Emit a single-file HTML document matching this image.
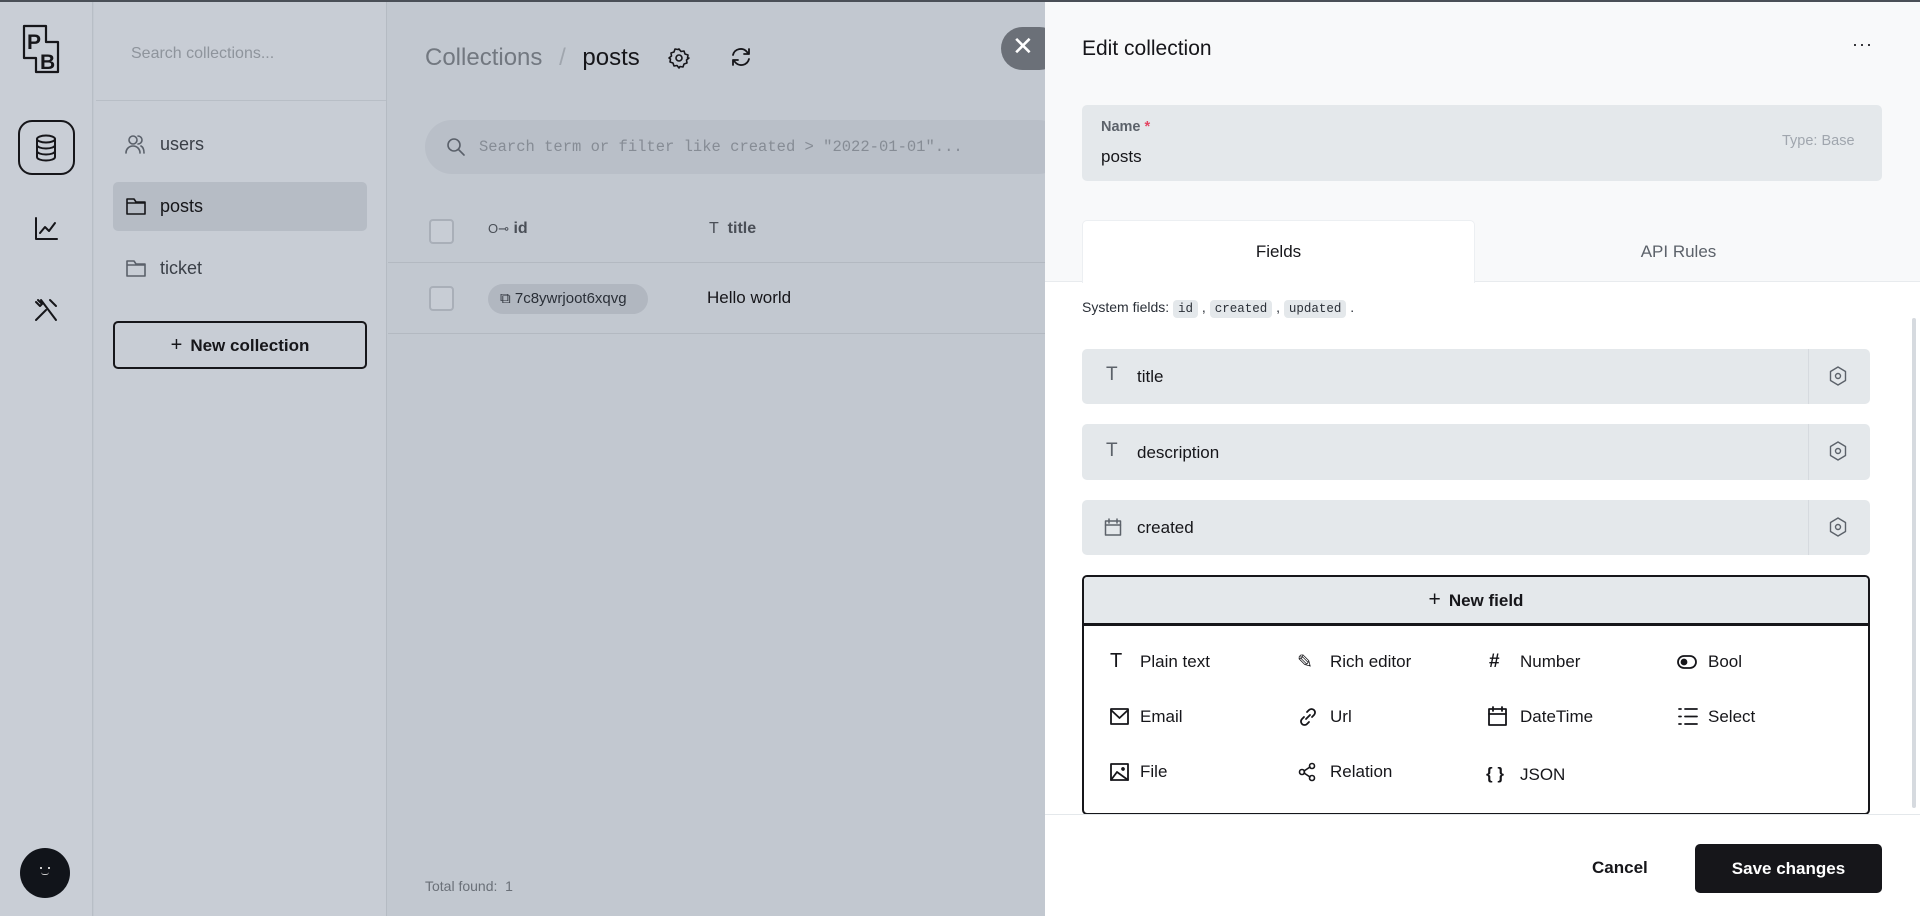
<!DOCTYPE html>
<html><head><meta charset="utf-8"><style>
*{box-sizing:border-box;margin:0;padding:0}
body{width:1920px;height:916px;overflow:hidden;font-family:"Liberation Sans",sans-serif;color:#16161a;position:relative;background:#c2c8d0}
.abs{position:absolute;white-space:nowrap}
svg{display:block}
.ic{fill:none;stroke:currentColor;stroke-width:1.6;stroke-linecap:round;stroke-linejoin:round}
</style></head><body>
<div class="abs" style="left:0;top:0;width:1920px;height:2px;background:#4a4f57;z-index:5"></div>
<!-- left sidebar -->
<div class="abs" style="left:0;top:0;width:93px;height:916px;background:#c9ced6;border-right:1px solid #b8bec6"></div>
<div class="abs" style="left:22px;top:24px;color:#16161a">
<svg width="48" height="50" viewBox="0 0 48 50" class="ic" style="stroke-width:2.2"><path d="M2 2h22v16h12v30H14V34H2z"/><text x="5" y="25" font-size="21" font-family="Liberation Sans" fill="#16161a" stroke="none" font-weight="bold">P</text><text x="18" y="45" font-size="21" font-family="Liberation Sans" fill="#16161a" stroke="none" font-weight="bold">B</text></svg></div>
<div class="abs" style="left:18px;top:120px;width:57px;height:55px;border:2px solid #16161a;border-radius:14px"></div>
<svg class="abs ic" style="left:33px;top:134px;stroke-width:2" width="26" height="28" viewBox="0 0 26 28"><ellipse cx="13" cy="5" rx="9" ry="3.5"/><path d="M4 5v18c0 2 4 3.5 9 3.5s9-1.5 9-3.5V5M4 11c0 2 4 3.5 9 3.5s9-1.5 9-3.5M4 17c0 2 4 3.5 9 3.5s9-1.5 9-3.5"/></svg>
<svg class="abs ic" style="left:33px;top:216px;stroke-width:2" width="26" height="26" viewBox="0 0 26 26"><path d="M3 2v21h21M7 17l5-6 4 4 6-8"/></svg>
<svg class="abs ic" style="left:33px;top:297px;stroke-width:2" width="26" height="26" viewBox="0 0 26 26"><path d="M3 23l10-10M17 3l6 6M8 3l15 20M5 3l4 4-2 2-4-4"/></svg>
<div class="abs" style="left:20px;top:848px;width:50px;height:50px;border-radius:50%;background:#11141a"></div>
<div class="abs" style="left:40px;top:867px;width:2px;height:2px;background:#ccc"></div><div class="abs" style="left:48px;top:867px;width:2px;height:2px;background:#ccc"></div>
<div class="abs" style="left:41px;top:872px;width:8px;height:3px;border-bottom:1.5px solid #ccc;border-radius:0 0 4px 4px"></div>
<!-- collections panel -->
<div class="abs" style="left:94px;top:0;width:293px;height:916px;background:#c8cdd5;border-right:1px solid #b5bbc3"></div>
<div class="abs" style="left:131px;top:45px;font-size:16px;color:#8e949c">Search collections...</div>
<div class="abs" style="left:96px;top:100px;width:290px;height:1px;background:#b8bec6"></div>
<svg class="abs ic" style="left:125px;top:134px;color:#5a606a" width="20" height="20" viewBox="0 0 20 20"><circle cx="8" cy="6" r="4"/><path d="M1 19c0-4 3-7 7-7s7 3 7 7M13 2a4 4 0 010 8M16 12c2 1 3 4 3 7"/></svg>
<div class="abs" style="left:160px;top:134px;font-size:18px;color:#3a3f47">users</div>
<div class="abs" style="left:113px;top:182px;width:254px;height:49px;background:#b6bcc5;border-radius:5px"></div>
<svg class="abs ic" style="left:126px;top:197px" width="20" height="18" viewBox="0 0 20 18"><path d="M1 2h7l2 3h9v12H1zM1 6h18"/></svg>
<div class="abs" style="left:160px;top:196px;font-size:18px">posts</div>
<svg class="abs ic" style="left:126px;top:259px;color:#5a606a" width="20" height="18" viewBox="0 0 20 18"><path d="M1 2h7l2 3h9v12H1zM1 6h18"/></svg>
<div class="abs" style="left:160px;top:258px;font-size:18px;color:#3a3f47">ticket</div>
<div class="abs" style="left:113px;top:321px;width:254px;height:48px;border:2px solid #16161a;border-radius:5px;text-align:center;line-height:44px;font-size:17px;font-weight:bold;color:#16161a"><span style="font-weight:normal;font-size:20px;margin-right:8px">+</span>New collection</div>
<!-- main -->
<div class="abs" style="left:425px;top:44px;font-size:24px;color:#727880">Collections <span style="color:#a0a6ae;margin:0 10px">/</span> <span style="color:#16161a">posts</span></div>
<svg class="abs ic" style="left:668px;top:47px" width="22" height="22" viewBox="0 0 22 22"><circle cx="11" cy="11" r="3"/><path d="M11 2l2 2.5 3-.5 1 3 3 1-.5 3L21 11l-2.5 2 .5 3-3 1-1 3-3-.5L11 21l-2-2.5-3 .5-1-3-3-1 .5-3L1 11l2.5-2-.5-3 3-1 1-3 3 .5z"/></svg>
<svg class="abs ic" style="left:730px;top:46px;stroke-width:1.8" width="22" height="22" viewBox="0 0 22 22"><path d="M3 9a8 8 0 0114-3l2 2M19 13a8 8 0 01-14 3l-2-2M19 3v5h-5M3 19v-5h5"/></svg>
<div class="abs" style="left:425px;top:120px;width:640px;height:54px;background:#b9bfc8;border-radius:27px"></div>
<svg class="abs ic" style="left:446px;top:137px;color:#5a606a" width="20" height="20" viewBox="0 0 20 20"><circle cx="8" cy="8" r="6"/><path d="M13 13l5 5"/></svg>
<div class="abs" style="left:479px;top:138px;font-family:'Liberation Mono',monospace;font-size:15.5px;color:#868c95">Search term or filter like created &gt; "2022-01-01"...</div>
<div class="abs" style="left:429px;top:219px;width:25px;height:25px;border:2px solid #a9afb8;border-radius:4px;background:#c8cdd5"></div>
<div class="abs" style="left:488px;top:220px;font-size:16px;color:#4a4f57"><span style="font-size:13px">O⊸</span> <b>id</b></div>
<div class="abs" style="left:709px;top:220px;font-size:16px;color:#4a4f57">T&nbsp; <b>title</b></div>
<div class="abs" style="left:388px;top:262px;width:660px;height:1px;background:#b3b9c1"></div>
<div class="abs" style="left:429px;top:286px;width:25px;height:25px;border:2px solid #a9afb8;border-radius:4px;background:#c8cdd5"></div>
<div class="abs" style="left:488px;top:284px;width:160px;height:30px;border-radius:15px;background:#b1b7c0;font-size:15px;line-height:30px;padding-left:12px;color:#2a2f37">⧉ 7c8ywrjoot6xqvg</div>
<div class="abs" style="left:707px;top:288px;font-size:17px">Hello world</div>
<div class="abs" style="left:388px;top:333px;width:660px;height:1px;background:#b3b9c1"></div>
<div class="abs" style="left:425px;top:878px;font-size:14px;color:#6a7078">Total found:&nbsp; 1</div>
<div class="abs" style="left:1001px;top:27px;width:60px;height:43px;border-radius:22px;background:#6b7078"></div>
<div class="abs" style="left:1012px;top:31px;font-size:26px;color:#fff">✕</div>
<!-- right panel -->
<div class="abs" style="left:1045px;top:2px;width:875px;height:914px;background:#fff"></div>
<div class="abs" style="left:1045px;top:2px;width:875px;height:280px;background:#f8f9fa;border-bottom:1px solid #e8ebee"></div>
<div class="abs" style="left:1082px;top:37px;font-size:21px">Edit collection</div>
<div class="abs" style="left:1852px;top:34px;font-size:18px;letter-spacing:1px">···</div>
<div class="abs" style="left:1082px;top:105px;width:800px;height:76px;background:#e4e8eb;border-radius:5px"></div>
<div class="abs" style="left:1101px;top:119px;font-size:14.5px;font-weight:bold;color:#5c626a">Name <span style="color:#e34562">*</span></div>
<div class="abs" style="left:1101px;top:147px;font-size:17px">posts</div>
<div class="abs" style="left:1782px;top:133px;font-size:14.5px;color:#a0a6ae">Type: Base</div>
<div class="abs" style="left:1082px;top:220px;width:393px;height:63px;background:#fff;border:1px solid #eceff2;border-bottom:none;border-radius:5px 5px 0 0"></div>
<div class="abs" style="left:1082px;top:242px;width:393px;text-align:center;font-size:17px">Fields</div>
<div class="abs" style="left:1475px;top:242px;width:407px;text-align:center;font-size:17px;color:#5c626a">API Rules</div>
<div class="abs" style="left:1082px;top:299px;font-size:14px;color:#2a2f37">System fields: <span style="font-family:'Liberation Mono',monospace;font-size:12.5px;background:#e4e8eb;padding:2px 5px;border-radius:4px">id</span> , <span style="font-family:'Liberation Mono',monospace;font-size:12.5px;background:#e4e8eb;padding:2px 5px;border-radius:4px">created</span> , <span style="font-family:'Liberation Mono',monospace;font-size:12.5px;background:#e4e8eb;padding:2px 5px;border-radius:4px">updated</span> .</div>
<!-- field rows -->
<div class="abs" style="left:1082px;top:349px;width:788px;height:55px;background:#e4e8eb;border-radius:5px"></div>
<div class="abs" style="left:1082px;top:424px;width:788px;height:56px;background:#e4e8eb;border-radius:5px"></div>
<div class="abs" style="left:1082px;top:500px;width:788px;height:55px;background:#e4e8eb;border-radius:5px"></div>
<div class="abs" style="left:1808px;top:349px;width:1px;height:55px;background:#d6dadf"></div>
<div class="abs" style="left:1808px;top:424px;width:1px;height:56px;background:#d6dadf"></div>
<div class="abs" style="left:1808px;top:500px;width:1px;height:55px;background:#d6dadf"></div>
<div class="abs" style="left:1106px;top:364px;font-size:19px;color:#5c626a">T</div>
<div class="abs" style="left:1137px;top:367px;font-size:17px">title</div>
<div class="abs" style="left:1106px;top:440px;font-size:19px;color:#5c626a">T</div>
<div class="abs" style="left:1137px;top:443px;font-size:17px">description</div>
<svg class="abs ic" style="left:1104px;top:518px;color:#5c626a;stroke-width:1.5" width="18" height="18" viewBox="0 0 18 18"><rect x="1.5" y="3" width="15" height="14"/><path d="M1.5 7h15M5 1v4M13 1v4"/></svg>
<div class="abs" style="left:1137px;top:518px;font-size:17px">created</div>
<svg class="abs ic" style="left:1829px;top:366px;color:#5c626a;stroke-width:1.4" width="18" height="20" viewBox="0 0 18 20"><circle cx="9" cy="10" r="2.5"/><path d="M9 1l7.5 4.5v9L9 19l-7.5-4.5v-9z"/></svg>
<svg class="abs ic" style="left:1829px;top:441px;color:#5c626a;stroke-width:1.4" width="18" height="20" viewBox="0 0 18 20"><circle cx="9" cy="10" r="2.5"/><path d="M9 1l7.5 4.5v9L9 19l-7.5-4.5v-9z"/></svg>
<svg class="abs ic" style="left:1829px;top:517px;color:#5c626a;stroke-width:1.4" width="18" height="20" viewBox="0 0 18 20"><circle cx="9" cy="10" r="2.5"/><path d="M9 1l7.5 4.5v9L9 19l-7.5-4.5v-9z"/></svg>
<!-- new field -->
<div class="abs" style="left:1082px;top:575px;width:788px;height:240px;border:2px solid #16161a;border-radius:5px;overflow:hidden">
<div style="height:49px;background:#e4e8eb;border-bottom:3px solid #16161a;text-align:center;line-height:46px;font-size:17px;font-weight:bold"><span style="font-weight:normal;font-size:21px;margin-right:8px">+</span>New field</div>
</div>
<div class="abs" style="font-size:17px;left:0;top:0">
<div class="abs" style="left:1110px;top:650px;font-size:20px">T</div><div class="abs" style="left:1140px;top:652px">Plain text</div>
<div class="abs" style="left:1297px;top:651px;font-size:19px">✎</div><div class="abs" style="left:1330px;top:652px">Rich editor</div>
<div class="abs" style="left:1489px;top:651px;font-size:19px;font-weight:bold">#</div><div class="abs" style="left:1520px;top:652px">Number</div>
<svg class="abs ic" style="left:1677px;top:655px;stroke-width:1.8" width="20" height="14" viewBox="0 0 20 14"><rect x="1" y="1" width="18" height="12" rx="6"/><circle cx="7" cy="7" r="2.5" fill="#16161a"/></svg><div class="abs" style="left:1708px;top:652px">Bool</div>
<svg class="abs ic" style="left:1110px;top:708px;stroke-width:1.8" width="19" height="17" viewBox="0 0 19 17"><rect x="1" y="1" width="17" height="15"/><path d="M1 2l8.5 8L18 2"/></svg><div class="abs" style="left:1140px;top:707px">Email</div>
<svg class="abs ic" style="left:1298px;top:707px;stroke-width:1.8" width="20" height="20" viewBox="0 0 20 20"><path d="M8 12l4-4M9 5l2-2a3.5 3.5 0 015 5l-2 2M11 15l-2 2a3.5 3.5 0 01-5-5l2-2"/></svg><div class="abs" style="left:1330px;top:707px">Url</div>
<svg class="abs ic" style="left:1488px;top:706px;stroke-width:1.8" width="19" height="20" viewBox="0 0 19 20"><rect x="1" y="3" width="17" height="16"/><path d="M1 8h17M5 1v4M14 1v4"/></svg><div class="abs" style="left:1520px;top:707px">DateTime</div>
<svg class="abs ic" style="left:1678px;top:707px;stroke-width:1.8" width="20" height="19" viewBox="0 0 20 19"><path d="M7 2h12M7 9.5h12M7 17h12M1 2h2M1 9.5h2M1 17h2"/></svg><div class="abs" style="left:1708px;top:707px">Select</div>
<svg class="abs ic" style="left:1110px;top:763px;stroke-width:1.8" width="19" height="18" viewBox="0 0 19 18"><rect x="1" y="1" width="17" height="16"/><path d="M1 17l6-8 11 8M12 6a1 1 0 100-.1"/></svg><div class="abs" style="left:1140px;top:762px">File</div>
<svg class="abs ic" style="left:1298px;top:762px;stroke-width:1.6" width="20" height="20" viewBox="0 0 20 20"><circle cx="4" cy="10" r="2.5"/><circle cx="14" cy="4" r="2.5"/><circle cx="14" cy="16" r="2.5"/><path d="M6 9l6-4M6 11l6 4"/></svg><div class="abs" style="left:1330px;top:762px">Relation</div>
<div class="abs" style="left:1486px;top:764px;font-size:17px;font-weight:bold">{ }</div><div class="abs" style="left:1520px;top:765px">JSON</div>
</div>
<!-- scrollbar -->
<div class="abs" style="left:1912px;top:318px;width:4px;height:490px;background:#d6dadf;border-radius:2px"></div>
<!-- footer -->
<div class="abs" style="left:1045px;top:814px;width:875px;height:1px;background:#e4e8eb"></div>
<div class="abs" style="left:1592px;top:858px;font-size:17px;font-weight:bold">Cancel</div>
<div class="abs" style="left:1695px;top:844px;width:187px;height:49px;background:#16161a;border-radius:5px;color:#fff;text-align:center;line-height:49px;font-size:17px;font-weight:bold">Save changes</div>
</body></html>
